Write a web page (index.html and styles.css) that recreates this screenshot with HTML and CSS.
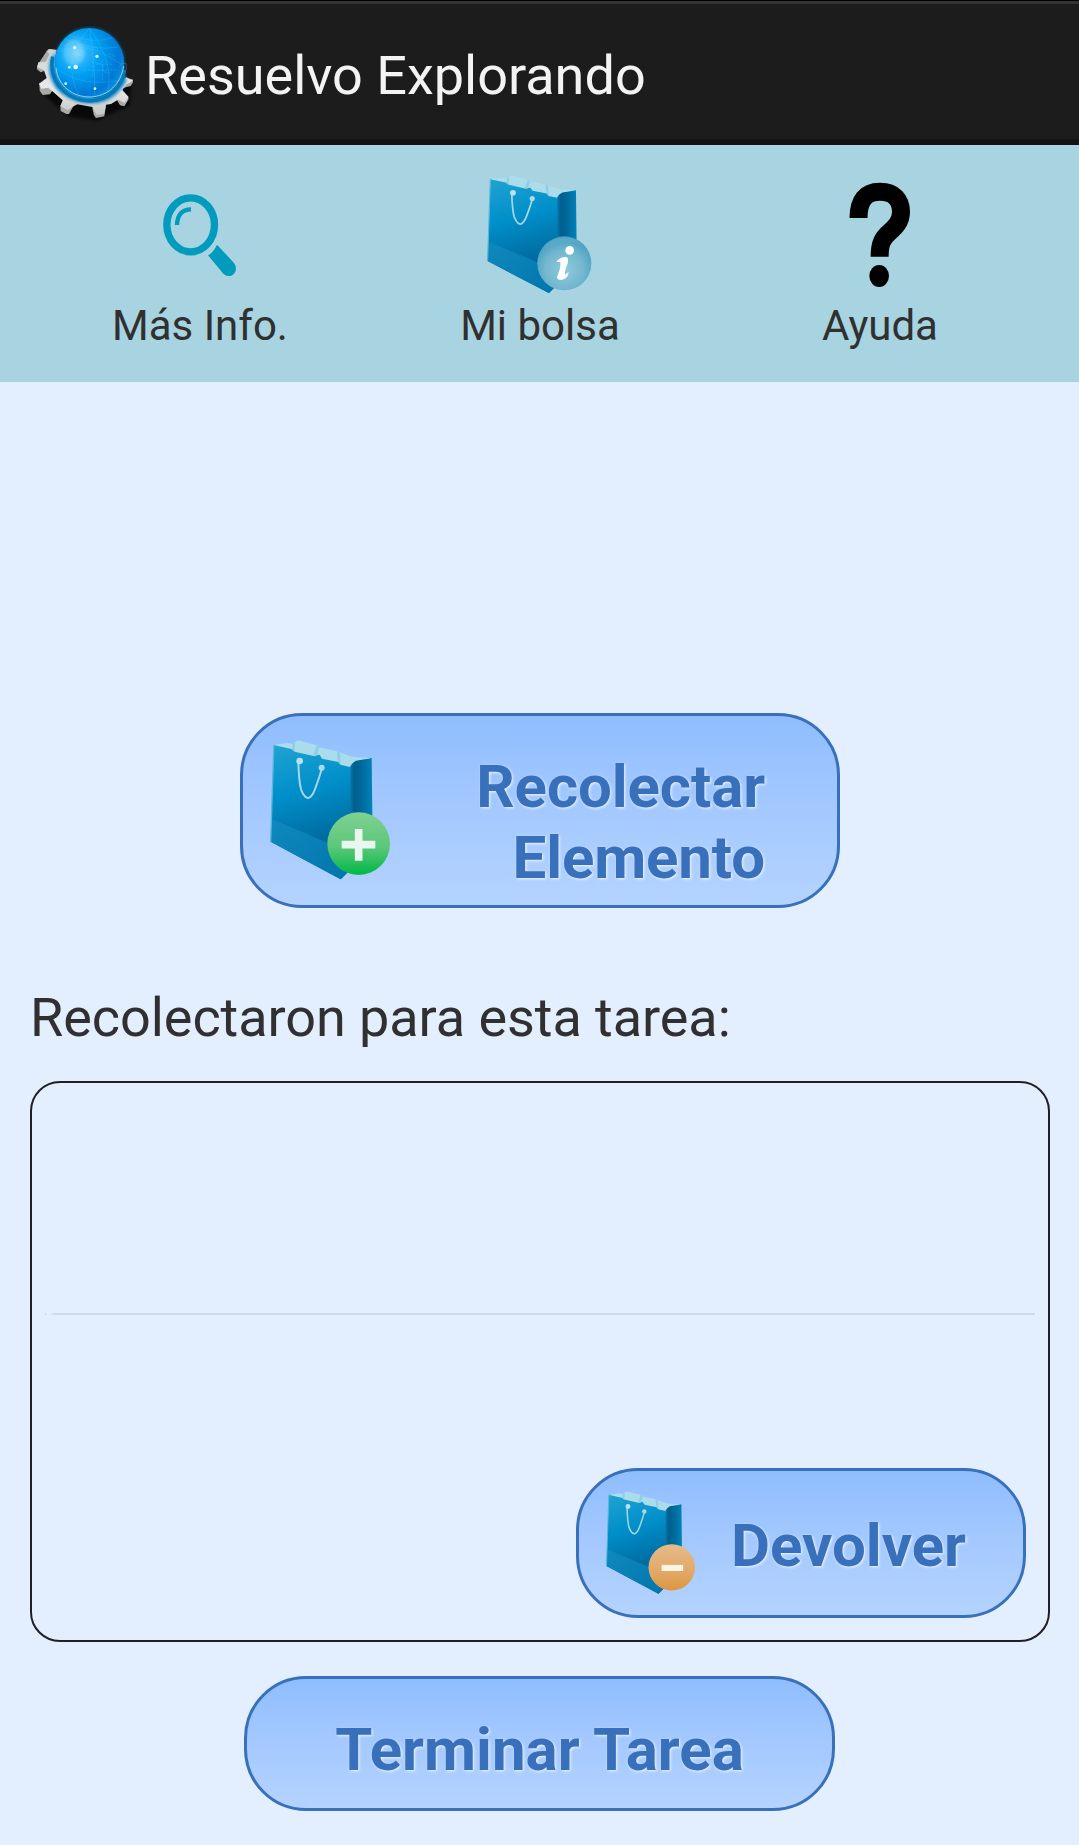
FILE: index.html
```html
<!DOCTYPE html>
<html lang="es">
<head>
<meta charset="utf-8">
<title>Resuelvo Explorando</title>
<link rel="stylesheet" href="styles.css">
</head>
<body>
<svg class="defs" width="0" height="0" aria-hidden="true">
  <defs>
    <linearGradient id="front" gradientUnits="userSpaceOnUse" x1="60" y1="10" x2="150" y2="320">
      <stop offset="0" stop-color="#1ea2d0"/><stop offset=".45" stop-color="#008fca"/><stop offset="1" stop-color="#00679b"/>
    </linearGradient>
    <linearGradient id="side" gradientUnits="userSpaceOnUse" x1="238" y1="0" x2="307" y2="0">
      <stop offset="0" stop-color="#0a7cad"/><stop offset=".22" stop-color="#005f8e"/><stop offset=".55" stop-color="#006a9c"/><stop offset="1" stop-color="#0084b8"/>
    </linearGradient>
    <linearGradient id="base" x1="0" y1="0" x2="1" y2="1">
      <stop offset="0" stop-color="#1089bf"/><stop offset="1" stop-color="#0075ac"/>
    </linearGradient>
    <symbol id="bag" viewBox="0 0 360 423" preserveAspectRatio="none">
      <path d="M238 78L250 60L305 54L307 225L300 330L212 418Z" fill="url(#side)"/>
      <path d="M12 14L72 20L242 76L238 390L212 418L2 305Z" fill="url(#front)"/>
      <path d="M7 238L190 316L240 336V390L212 418L2 305Z" fill="url(#base)"/>
      <path d="M10 15L52 9L68 12L84 1L140 16L148 22L200 34L246 50L303 55L258 62Q246 68 240 81L211 74L205 66L156 56L148 43L134 49L74 35L64 27Z" fill="#abdcec"/>
      <path d="M140 16L148 22L140 49L130 46ZM200 34L210 38L212 74L204 66ZM68 12L76 8L74 34L66 28Z" fill="#86c6e0" opacity=".7"/>
      <path d="M12 15L11 30L2 305" fill="none" stroke="#58b6dc" stroke-width="4"/>
      <path d="M85 64C86 105 88 128 93 148Q103 174 115 174Q126 172 136 145Q147 116 156 84" fill="none" stroke="#a5d6e9" stroke-width="6"/>
      <circle cx="89" cy="63" r="10" fill="#b9e2f1"/><circle cx="155" cy="83" r="9" fill="#a9d9eb"/>
    </symbol>
    <linearGradient id="green" x1="0" y1="0" x2="0" y2="1">
      <stop offset="0" stop-color="#7fd193"/><stop offset=".55" stop-color="#5cc779"/><stop offset="1" stop-color="#00b847"/>
    </linearGradient>
    <linearGradient id="orange" x1="0" y1="0" x2="0" y2="1">
      <stop offset="0" stop-color="#e6bb89"/><stop offset=".6" stop-color="#e1a967"/><stop offset="1" stop-color="#db9540"/>
    </linearGradient>
    <radialGradient id="info" cx=".5" cy=".62" r=".6">
      <stop offset="0" stop-color="#8fcbdc"/><stop offset=".6" stop-color="#72b7cf"/><stop offset="1" stop-color="#479fc0"/>
    </radialGradient>
    <radialGradient id="globe" cx=".32" cy=".36" r=".72">
      <stop offset="0" stop-color="#78d2fb"/><stop offset=".2" stop-color="#28b4fa"/><stop offset=".45" stop-color="#009ff2"/><stop offset=".85" stop-color="#0078d4"/><stop offset="1" stop-color="#0a8fe0"/>
    </radialGradient>
    <linearGradient id="metal" x1="0" y1="0" x2="0" y2="1">
      <stop offset="0" stop-color="#c9d0d0"/><stop offset=".6" stop-color="#e8eaea"/><stop offset="1" stop-color="#c6c6c3"/>
    </linearGradient>
    <filter id="soft" x="-20%" y="-20%" width="140%" height="140%"><feGaussianBlur stdDeviation="5"/></filter>
    <clipPath id="ball"><circle cx="268" cy="188" r="101"/></clipPath>
  </defs>
</svg>

<header class="appbar">
  <svg class="logo" viewBox="105 75 300 285">
    <path d="M118 262L140 292L185 330L205 350L290 362L325 345L388 318L395 250Z" fill="#000" opacity=".65" filter="url(#soft)"/>
    <path d="M142 150L148 147L170 150L160 185L134 212L122 217L111 208V198ZM118 250L145 250L158 270L150 283L128 285L119 272ZM181 318L192 300L224 312L207 342H199L182 333ZM277 325L318 315L313 349L288 354L282 346ZM346 292L384 290L386 298L373 319L360 316ZM374 234L398 238L399 247L392 258L372 263Z" fill="#a9a9a5"/>
    <path d="M142 155L147 147L170 150L164 180L168 215L190 256L235 288L290 296L338 278L365 250L378 231L399 242L380 253L367 270L386 291L374 309L354 299L333 312L318 314L313 341L290 345L277 321L232 313L218 320L203 331L181 318L188 301L159 275L145 263L124 266L117 251L140 234L132 211L112 202L115 187L137 185L148 163Z" fill="url(#metal)"/>
    <path d="M153 173Q136 219 169 266Q215 315 290 310Q350 300 379 242L368 205Q355 267 293 289Q215 293 174 225Q158 190 166 161Z" fill="#168bd0" filter="url(#soft)"/>
    <circle cx="268" cy="188" r="105" fill="#008cdf" filter="url(#soft)" opacity=".7"/>
    <path d="M158 170C145 240 193 300 270 303C330 300 366 259 374 211" fill="none" stroke="#0878b4" stroke-width="10"/>
    <circle cx="268" cy="188" r="104" fill="url(#globe)"/>
    <g clip-path="url(#ball)" fill="none" stroke="#65dcfa" stroke-width="1.5" opacity=".4">
      <path d="M177 155Q260 115 370 198M170 206Q250 265 366 239M207 105Q280 133 337 113M198 119Q290 155 354 141M268 85Q180 180 238 289M268 85Q285 180 284 290M268 85Q345 190 322 278"/>
      <path d="M181 150L201 132L230 139L249 133L275 150L292 139V156L270 160L288 189L308 193V214L330 220M278 182V234M308 180V245M250 210H355M288 193H335M325 160L345 170" stroke-dasharray="10 3"/>
    </g>
    <path d="M168 203C174 259 219 291 270 291C325 289 363 252 371 198" fill="none" stroke="#86d9f3" stroke-width="3"/>
    <path d="M363 191H379V208L371 216" fill="none" stroke="#49a9d1" stroke-width="2" opacity=".6"/>
    <ellipse cx="222" cy="158" rx="31" ry="40" fill="#a7e4ff" opacity=".35" filter="url(#soft)"/>
    <g fill="#d9faff"><circle cx="224" cy="143" r="5"/><circle cx="291" cy="169" r="5"/><circle cx="227" cy="201" r="7"/><circle cx="208" cy="202" r="4"/><circle cx="197" cy="251" r="4"/><circle cx="285" cy="266" r="4"/></g>
  </svg>
  <h1 class="appbar-title">Resuelvo Explorando</h1>
</header>

<nav class="toolbar">
  <a class="tool">
    <svg class="tool-icon" viewBox="150 45 360 360">
      <ellipse cx="302" cy="194.500" rx="71.500" ry="81" fill="none" stroke="#009bbd" stroke-width="22"/>
      <path d="M261 195Q262 149 303 148" fill="none" stroke="#009bbd" stroke-width="13"/>
      <path d="M381 254L432 309Q441 321 436 335Q430 347 418 348Q408 349 400 341L354 286Q371 277 381 254Z" fill="#009bbd"/>
    </svg>
    <span>Más Info.</span>
  </a>
  <a class="tool">
    <svg class="tool-icon" viewBox="121 45 360 360">
      <use href="#bag" x="142" y="45" width="315" height="358"/>
      <circle cx="374" cy="310" r="81" fill="url(#info)"/>
      <path d="M310 265A80 80 0 0 1 440 265Q390 225 310 265Z" fill="#5fb0cb" opacity=".5"/>
      <circle cx="390" cy="271" r="13" fill="#fff"/>
      <path d="M350 305Q362 289 382 291Q388 298 382 316Q373 338 377 344L387 335Q386 353 369 359Q353 362 352 350Q364 326 362 307Z" fill="#fff"/>
    </svg>
    <span>Mi bolsa</span>
  </a>
  <a class="tool">
    <svg class="tool-icon" viewBox="119 45 360 360">
      <path d="M234.500 174C234.500 121 256 95.500 299 95.500C341 95.500 362 119 362 156C362 184 346 200 328 216C306 235 298 250 298 290" fill="none" stroke="#000" stroke-width="54"/>
      <ellipse cx="296.500" cy="348" rx="29.500" ry="33"/>
    </svg>
    <span>Ayuda</span>
  </a>
</nav>

<main class="content">
  <button class="btn btn-collect">
    <svg class="collect-icon" viewBox="0 0 360 423">
      <use href="#bag" width="360" height="423"/>
      <circle cx="266" cy="311" r="94" fill="url(#green)"/>
      <path d="M215 314H316M266 267V362" stroke="#e9f8ef" stroke-width="23"/>
    </svg>
    <span class="collect-label">Recolectar Elemento</span>
  </button>

  <h2 class="heading">Recolectaron para esta tarea:</h2>

  <section class="panel">
    <hr class="divider">
    <button class="btn btn-return">
      <svg class="return-icon" viewBox="0 0 360 423" preserveAspectRatio="none">
        <use href="#bag" width="360" height="423"/>
        <circle cx="266" cy="311" r="94" fill="url(#orange)"/>
        <path d="M225 313H312" stroke="#fff4e6" stroke-width="25"/>
      </svg>
      <span>Devolver</span>
    </button>
  </section>

  <button class="btn btn-finish">Terminar Tarea</button>
</main>
</body>
</html>
```
FILE: styles.css
```css
* { box-sizing: border-box; }

body {
  margin: 0;
  min-height: 1845px;
  background: #e3efff;
  color: #303030;
  font-family: Roboto, sans-serif;
}

.defs { position: absolute; }

h1, h2 { margin: 0; font-weight: 400; }

.appbar {
  display: flex;
  height: 145px;
  padding: 0 35px;
  gap: 10px;
  background: linear-gradient(#000 1px, #363436 1px 4px, #1c1c1c 4px 139px, #131313 139px);
}

.logo {
  width: 100px;
  height: 95px;
  margin-top: 25px;
  overflow: visible;
}

.appbar-title {
  margin-top: 44px;
  color: #f3f3f3;
  font-size: 54px;
  line-height: 63px;
}

.toolbar {
  display: grid;
  grid-template-columns: repeat(3, 1fr);
  height: 237px;
  padding: 30px 29px 0 30px;
  background: #a8d3e0;
}

.tool {
  display: flex;
  flex-direction: column;
  align-items: center;
  gap: 6px;
  font-size: 42px;
  line-height: 49px;
}

.tool-icon { width: 120px; height: 120px; }

.content {
  display: flex;
  flex-direction: column;
  align-items: center;
  padding: 331px 29px 0 30px;
}

.btn {
  display: flex;
  align-items: center;
  padding: 0;
  border: 3px solid #3870bc;
  border-radius: 62px;
  background: linear-gradient(#8fbdff, #a3c8ff 45%, #b4d3ff);
  color: #3870bc;
  font: 700 60px/71px Roboto, sans-serif;
  text-shadow: 1px 1px 3px #f1f7ff;
}

.btn-collect {
  width: 600px;
  height: 195px;
  justify-content: space-between;
  padding: 0 72px 0 27px;
}

.collect-icon { width: 120px; height: 141px; margin-bottom: 1px; }

.collect-label {
  width: 300px;
  padding-top: 22px;
  letter-spacing: -.12px;
  text-align: right;
}

.heading {
  align-self: flex-start;
  margin-top: 78px;
  font-size: 54px;
  letter-spacing: -.06px;
  line-height: 63px;
}

.panel {
  display: flex;
  flex-direction: column;
  align-items: flex-end;
  justify-content: space-between;
  width: 1020px;
  height: 561px;
  margin-top: 32px;
  padding: 230px 22px 22px 13px;
  border: 2px solid #202020;
  border-radius: 30px;
}

.divider {
  width: 990px;
  height: 2px;
  margin: 0 -9px 0 0;
  border: 0;
  background: linear-gradient(90deg, #cbd9ea 1px, transparent 1px 5px, #cbd9ea 9px);
}

.btn-return {
  width: 450px;
  height: 150px;
  gap: 36px;
  padding: 4px 0 0 27px;
}

.return-icon { width: 89px; height: 104px; margin-bottom: 4px; }

.btn-finish {
  width: 591px;
  height: 135px;
  justify-content: center;
  margin: 34px 1px 0 0;
  padding-top: 11px;
}
```
